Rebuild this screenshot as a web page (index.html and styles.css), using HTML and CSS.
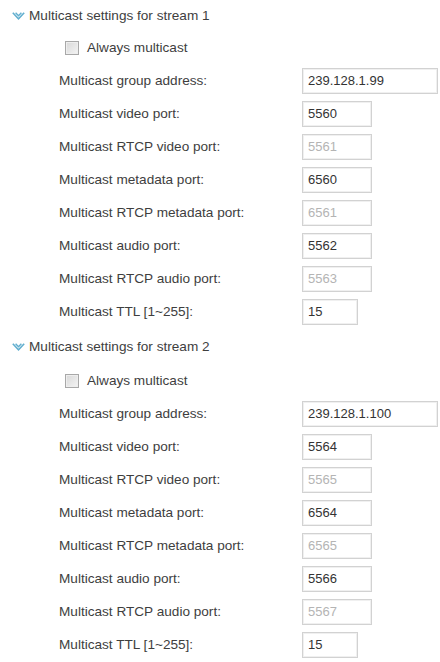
FILE: index.html
```html
<!DOCTYPE html>
<html>
<head>
<meta charset="utf-8">
<link rel="stylesheet" href="styles.css">
</head>
<body>
<div class="page">
  <section class="stream">
    <div class="head">
      <svg class="chev" width="13" height="8" viewBox="0 0 13 8"><polyline points="0.8,0.8 6.5,6.8 12.2,0.8" fill="none" stroke="#62afcf" stroke-width="1.6"/><polyline points="3.6,0.8 6.5,3.8 9.4,0.8" fill="none" stroke="#62afcf" stroke-width="1.4"/></svg>
      <span>Multicast settings for stream 1</span>
    </div>
    <div class="check"><span class="box"></span><span>Always multicast</span></div>
    <div class="field"><span class="lbl">Multicast group address:</span><input class="in wide" value="239.128.1.99"></div>
    <div class="field"><span class="lbl">Multicast video port:</span><input class="in port" value="5560"></div>
    <div class="field"><span class="lbl">Multicast RTCP video port:</span><input class="in port off" value="5561" disabled></div>
    <div class="field"><span class="lbl">Multicast metadata port:</span><input class="in port" value="6560"></div>
    <div class="field"><span class="lbl">Multicast RTCP metadata port:</span><input class="in port off" value="6561" disabled></div>
    <div class="field"><span class="lbl">Multicast audio port:</span><input class="in port" value="5562"></div>
    <div class="field"><span class="lbl">Multicast RTCP audio port:</span><input class="in port off" value="5563" disabled></div>
    <div class="field"><span class="lbl">Multicast TTL [1~255]:</span><input class="in ttl" value="15"></div>
  </section>
  <section class="stream">
    <div class="head">
      <svg class="chev" width="13" height="8" viewBox="0 0 13 8"><polyline points="0.8,0.8 6.5,6.8 12.2,0.8" fill="none" stroke="#62afcf" stroke-width="1.6"/><polyline points="3.6,0.8 6.5,3.8 9.4,0.8" fill="none" stroke="#62afcf" stroke-width="1.4"/></svg>
      <span>Multicast settings for stream 2</span>
    </div>
    <div class="check"><span class="box"></span><span>Always multicast</span></div>
    <div class="field"><span class="lbl">Multicast group address:</span><input class="in wide" value="239.128.1.100"></div>
    <div class="field"><span class="lbl">Multicast video port:</span><input class="in port" value="5564"></div>
    <div class="field"><span class="lbl">Multicast RTCP video port:</span><input class="in port off" value="5565" disabled></div>
    <div class="field"><span class="lbl">Multicast metadata port:</span><input class="in port" value="6564"></div>
    <div class="field"><span class="lbl">Multicast RTCP metadata port:</span><input class="in port off" value="6565" disabled></div>
    <div class="field"><span class="lbl">Multicast audio port:</span><input class="in port" value="5566"></div>
    <div class="field"><span class="lbl">Multicast RTCP audio port:</span><input class="in port off" value="5567" disabled></div>
    <div class="field"><span class="lbl">Multicast TTL [1~255]:</span><input class="in ttl" value="15"></div>
  </section>
</div>
</body>
</html>
```
FILE: styles.css
```css
html, body {
  margin: 0;
  padding: 0;
  background: #ffffff;
}
.page {
  font-family: "Liberation Sans", Arial, sans-serif;
  font-size: 13.6px;
  color: #3e3e3e;
  display: flex;
  flex-direction: column;
}
.stream {
  display: flex;
  flex-direction: column;
}
.head {
  height: 31px;
  display: flex;
  align-items: center;
  padding-left: 12px;
  gap: 4px;
}
.stream + .stream .head {
  height: 36px;
}
.chev {
  display: block;
  margin-top: 1px;
}
.check {
  height: 33px;
  display: flex;
  align-items: center;
  padding-left: 65px;
  gap: 8px;
}
.box {
  display: block;
  width: 12px;
  height: 12px;
  border: 1px solid #a8a8a8;
  background: linear-gradient(135deg, #d8d8d8, #f4f4f4);
  box-shadow: inset 0 0 0 1px #eeeeee;
}
.field {
  height: 33px;
  display: grid;
  grid-template-columns: 243px auto;
  align-items: center;
  padding-left: 59px;
}
.lbl {
  white-space: nowrap;
}
.in {
  box-sizing: border-box;
  height: 26px;
  border: 1px solid #d2d2d2;
  box-shadow: inset 0 0 0 1px #f0f0f0;
  background: #ffffff;
  padding: 0 5px;
  margin: 0;
  font-family: "Liberation Sans", Arial, sans-serif;
  font-size: 13px;
  color: #333333;
  outline: none;
}
.wide { width: 136px; }
.port { width: 70px; }
.ttl { width: 56px; }
.off {
  color: #b4b4b4;
  -webkit-text-fill-color: #b4b4b4;
  background: #ffffff;
}
```
